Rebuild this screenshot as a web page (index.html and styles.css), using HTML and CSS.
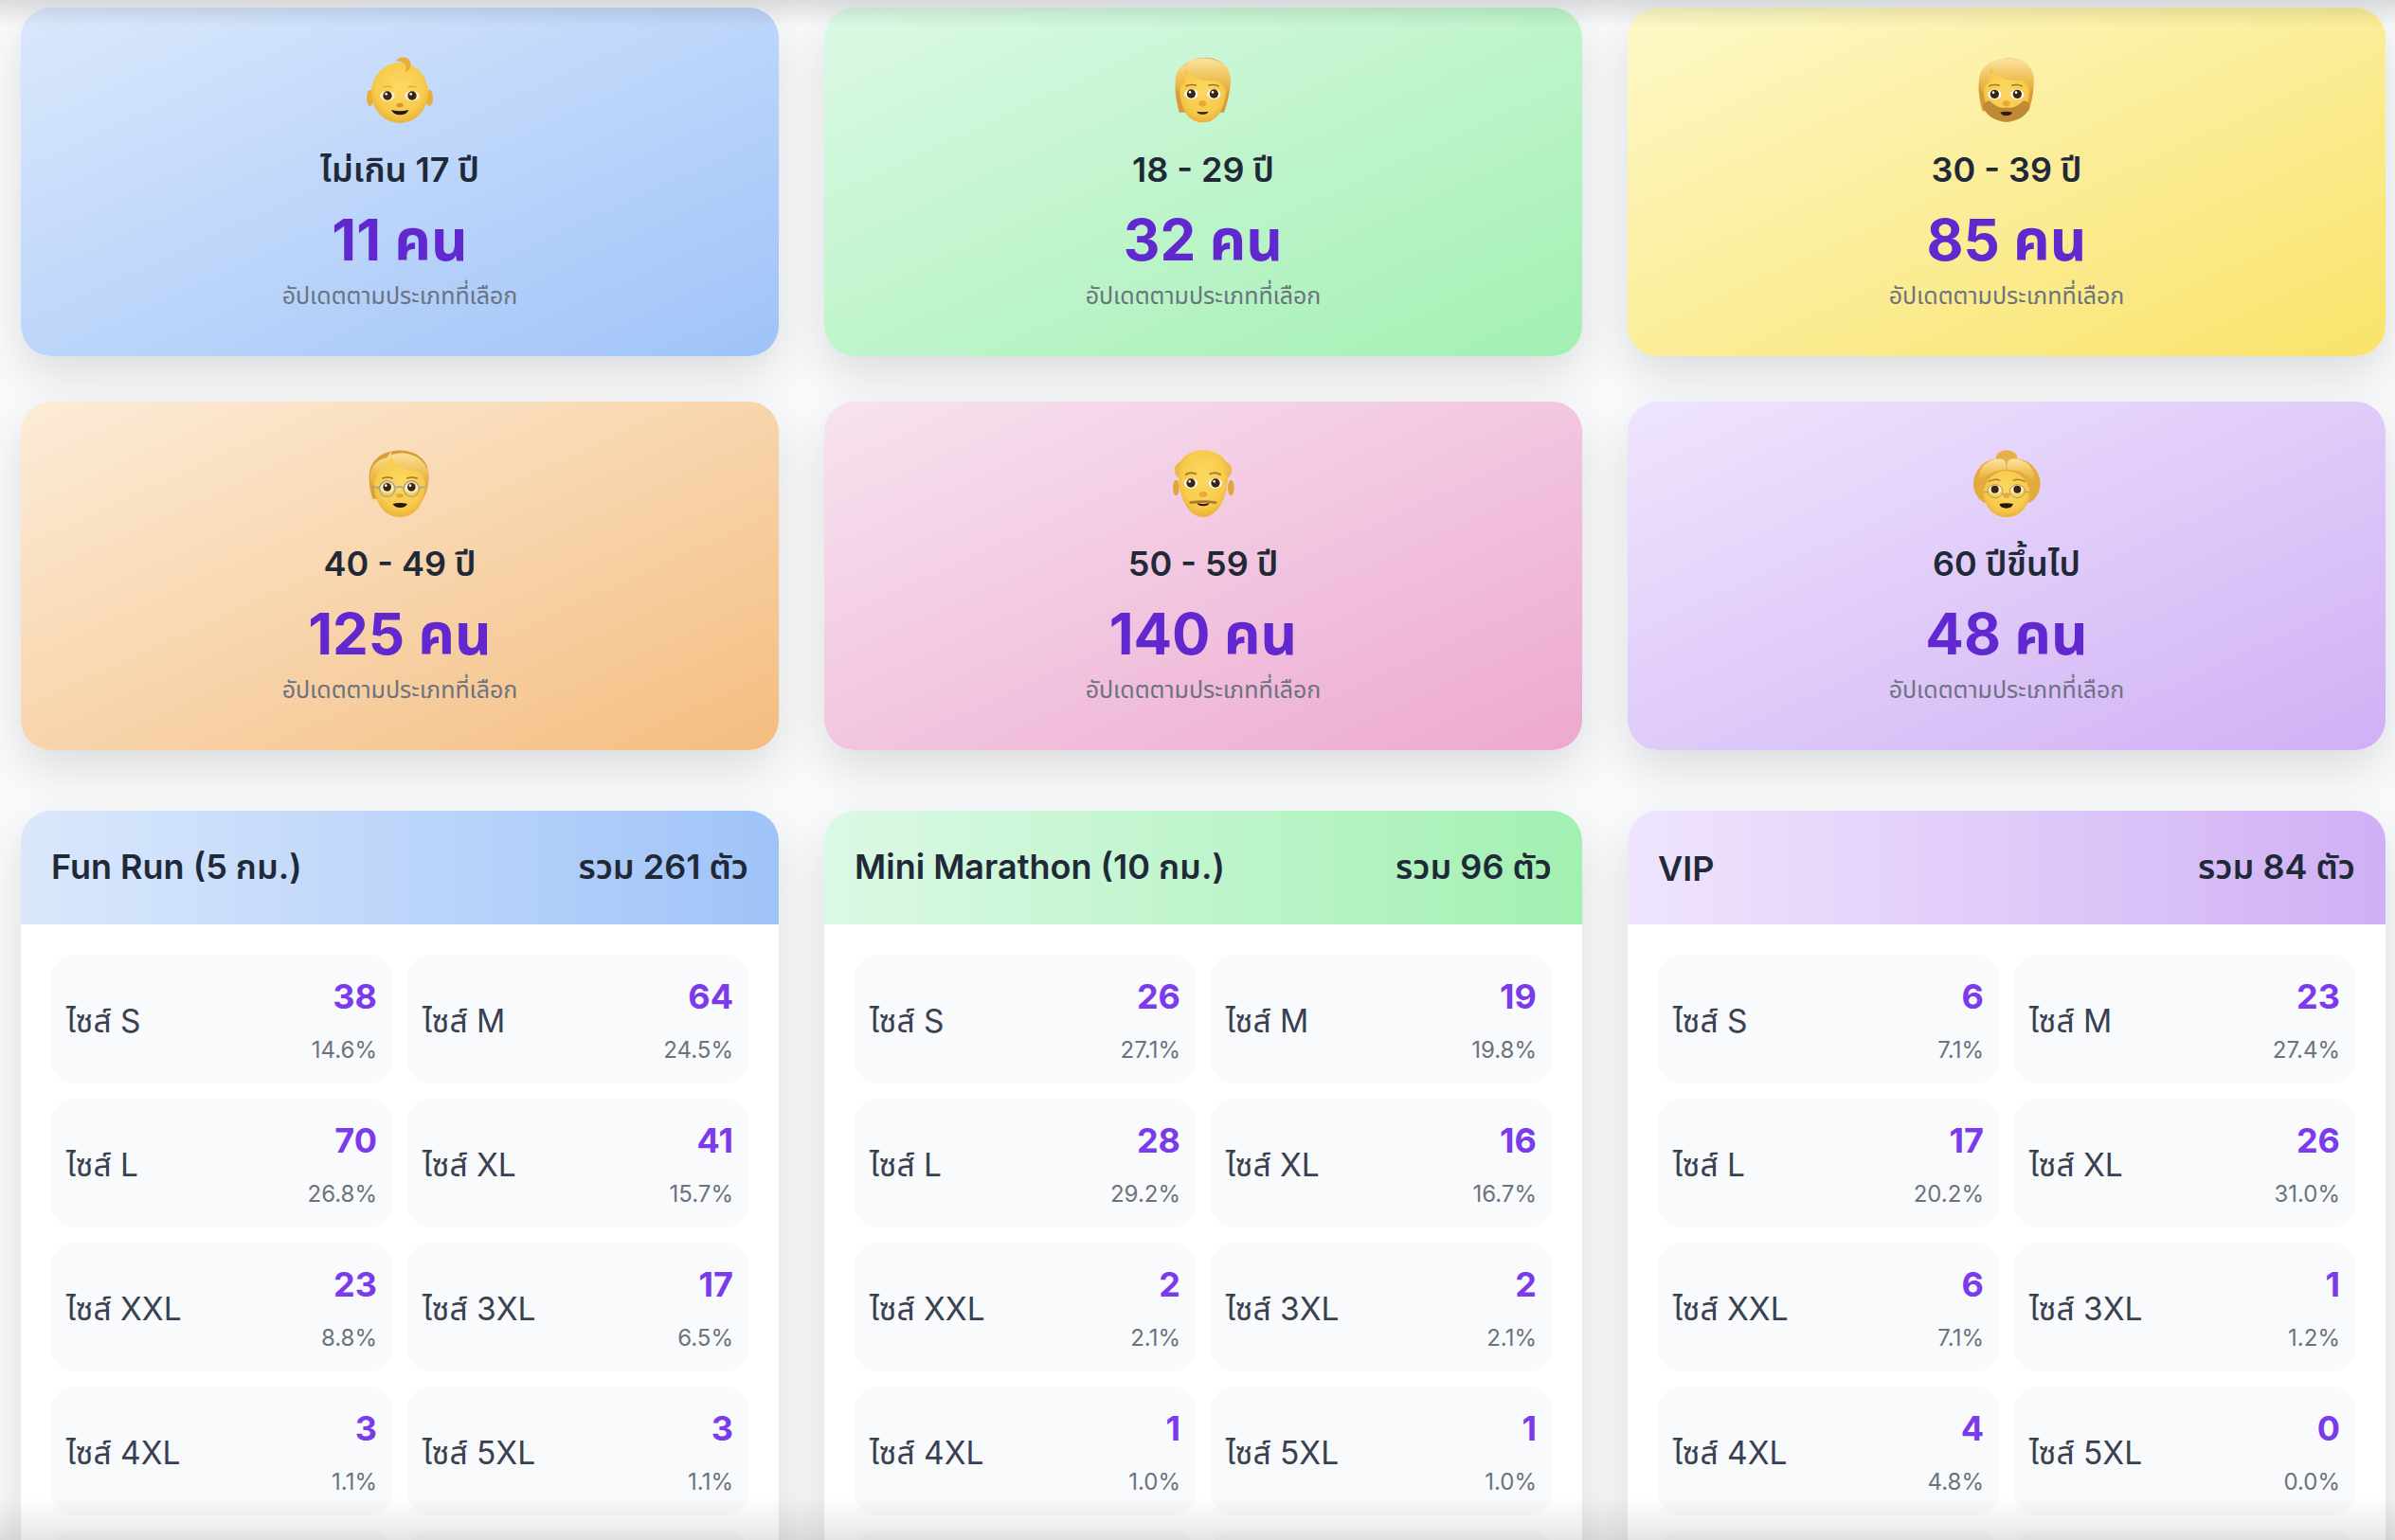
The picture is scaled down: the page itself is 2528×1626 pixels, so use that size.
FILE: index.html
```html
<!DOCTYPE html>
<html lang="th">
<head>
    <meta charset="UTF-8">
    <title>สรุปจำนวนผู้สมัคร</title>
    <link rel="stylesheet" href="styles.css">
</head>
<body>
<svg class="defs" width="0" height="0">
    <defs>
        <radialGradient id="skin" cx="0.5" cy="0.42" r="0.62">
            <stop offset="0" stop-color="#fcd964"/>
            <stop offset="0.68" stop-color="#f8cb4c"/>
            <stop offset="1" stop-color="#e8ac32"/>
        </radialGradient>
        <linearGradient id="hair" x1="0" y1="0" x2="0" y2="1">
            <stop offset="0" stop-color="#fce3a2"/>
            <stop offset="0.55" stop-color="#f0c258"/>
            <stop offset="1" stop-color="#e2a733"/>
        </linearGradient>
    </defs>
</svg>

<div class="edge-top"></div>
<div class="edge-bottom"></div>

<div class="page">
    <div class="ages">
        <div class="age-card blue">
            <svg class="emoji" viewBox="6 0 480 330">
                <ellipse cx="152" cy="190" rx="11" ry="26" fill="#e8ae3c"/>
                <ellipse cx="340" cy="190" rx="11" ry="26" fill="#e8ae3c"/>
                <ellipse cx="246" cy="174" rx="90" ry="96" fill="url(#skin)"/>
                <path d="M234 73c10-16 46-18 47 13 0 12-8 21-19 21 8-11 8-31-28-34z" fill="#e9ae33"/>
                <path d="M194 156q13-5 26 0M272 156q13-5 26 0" stroke="#d99b45" stroke-width="3" fill="none"/>
                <ellipse cx="207" cy="184" rx="23" ry="16" fill="#fdf0cf"/>
                <ellipse cx="285" cy="184" rx="23" ry="16" fill="#fdf0cf"/>
                <circle cx="207" cy="183" r="14" fill="#3c2412"/>
                <circle cx="285" cy="183" r="14" fill="#3c2412"/>
                <circle cx="203" cy="178" r="4" fill="#fff"/>
                <circle cx="281" cy="178" r="4" fill="#fff"/>
                <ellipse cx="246" cy="213" rx="11" ry="7" fill="#d8923a"/>
                <path d="M219 228q27 8 55 0q-6 16-27 16t-28-16z" fill="#23170e"/>
            </svg>
            <div class="age-name">ไม่เกิน 17 ปี</div>
            <div class="age-count">11 คน</div>
            <div class="age-note">อัปเดตตามประเภทที่เลือก</div>
        </div>
        <div class="age-card green">
            <svg class="emoji" viewBox="-30 0 480 330">
                <path d="M134 236c-14-50-20-110 6-140 30-44 130-48 150 10 12 40 0 90-14 130z" fill="#d69a38"/>
                <path d="M134 150c0 66 24 118 74 118s76-52 76-118c0-40-30-60-76-60s-74 20-74 60z" fill="url(#skin)"/>
                <path d="M130 178c-14-38-12-78 24-94 18-26 108-30 134 14 16 32 8 62-4 80-4-20-14-36-32-42-37 4-80-8-94-36-8 10-6 28-4 36-12 10-20 24-24 42z" fill="url(#hair)"/>
                <path d="M155 153q16-8 34-2M226 151q18-6 34 2" stroke="#a8702a" stroke-width="5" fill="none"/>
                <ellipse cx="172" cy="178" rx="21" ry="16" fill="#fff"/>
                <ellipse cx="244" cy="178" rx="21" ry="16" fill="#fff"/>
                <circle cx="172" cy="177" r="14" fill="#3c2412"/>
                <circle cx="244" cy="177" r="14" fill="#3c2412"/>
                <circle cx="168" cy="172" r="4" fill="#fff"/>
                <circle cx="240" cy="172" r="4" fill="#fff"/>
                <ellipse cx="208" cy="208" rx="12" ry="10" fill="#e9a93a"/>
                <path d="M190 233q18 4 36 0q-2 9-18 9t-18-9z" fill="#2a1b10"/>
            </svg>
            <div class="age-name">18 - 29 ปี</div>
            <div class="age-count">32 คน</div>
            <div class="age-note">อัปเดตตามประเภทที่เลือก</div>
        </div>
        <div class="age-card yellow">
            <svg class="emoji" viewBox="-6 0 480 330">
                <path d="M158 232c-14-50-20-110 6-134 30-44 130-48 150 10 12 40 2 90-10 124z" fill="#d69a38"/>
                <path d="M160 150c0 66 24 116 74 116s74-50 74-116c0-40-30-60-74-60s-74 20-74 60z" fill="url(#skin)"/>
                <path d="M160 214c4 30 40 52 74 52s70-22 74-52c-6-10-14-16-22-14-14 14-36 26-52 20-18 6-38-6-52-20-8-2-16 4-22 14z" fill="#c08a35"/>
                <path d="M156 176c-14-38-12-78 22-92 18-26 108-30 134 14 14 30 8 60-2 78-4-20-14-36-30-42-37 4-80-8-94-36-8 10-6 28-4 36-12 10-22 24-26 42z" fill="url(#hair)"/>
                <path d="M178 153q16-8 34-2M250 151q18-6 34 2" stroke="#a8702a" stroke-width="5" fill="none"/>
                <ellipse cx="196" cy="179" rx="21" ry="16" fill="#fff"/>
                <ellipse cx="268" cy="179" rx="21" ry="16" fill="#fff"/>
                <circle cx="196" cy="178" r="14" fill="#3c2412"/>
                <circle cx="268" cy="178" r="14" fill="#3c2412"/>
                <circle cx="192" cy="173" r="4" fill="#fff"/>
                <circle cx="264" cy="173" r="4" fill="#fff"/>
                <ellipse cx="233" cy="208" rx="12" ry="9" fill="#e9a93a"/>
                <path d="M214 236q19-5 38 0q-4 10-19 10t-19-10z" fill="#2a1b10"/>
            </svg>
            <div class="age-name">30 - 39 ปี</div>
            <div class="age-count">85 คน</div>
            <div class="age-note">อัปเดตตามประเภทที่เลือก</div>
        </div>
        <div class="age-card orange">
            <svg class="emoji" viewBox="6 -12 480 330">
                <path d="M160 200c-16-50-16-100 10-124 36-44 140-40 162 20 12 40 2 80-12 104z" fill="#d89e38"/>
                <path d="M162 140c0 66 30 118 84 118s84-52 84-118c-4-40-30-70-84-70s-80 30-84 70z" fill="url(#skin)"/>
                <path d="M156 164c-10-46 0-84 50-96l14-20-2 14c40-18 112 0 120 64 0 14-2 26-8 36-4-24-14-44-34-50-30 0-60-16-78-40-8 18-46 36-62 92z" fill="url(#hair)"/>
                <path d="M190 136q18-8 34 0M268 136q16-8 34 0" stroke="#a8702a" stroke-width="5" fill="none"/>
                <ellipse cx="206" cy="165" rx="20" ry="16" fill="#fdf3d8"/>
                <ellipse cx="283" cy="165" rx="20" ry="16" fill="#fdf3d8"/>
                <circle cx="206" cy="163" r="13" fill="#3c2412"/>
                <circle cx="283" cy="163" r="13" fill="#3c2412"/>
                <circle cx="202" cy="158" r="4" fill="#fff"/>
                <circle cx="279" cy="158" r="4" fill="#fff"/>
                <path d="M160 162l22 3M232 165q12-6 26 0M307 165l20-3" stroke="#9aa0a0" stroke-width="4" fill="none"/>
                <circle cx="206" cy="168" r="25" stroke="#9aa0a0" stroke-width="4" fill="none"/>
                <circle cx="283" cy="168" r="25" stroke="#9aa0a0" stroke-width="4" fill="none"/>
                <ellipse cx="246" cy="190" rx="11" ry="7" fill="#e9a93a"/>
                <path d="M224 216q23-6 46 0q-6 12-23 12t-23-12z" fill="#23170e"/>
            </svg>
            <div class="age-name">40 - 49 ปี</div>
            <div class="age-count">125 คน</div>
            <div class="age-note">อัปเดตตามประเภทที่เลือก</div>
        </div>
        <div class="age-card pink">
            <svg class="emoji" viewBox="-30 -12 480 330">
                <ellipse cx="124" cy="165" rx="10" ry="25" fill="#e0a73a"/>
                <ellipse cx="298" cy="165" rx="10" ry="25" fill="#e0a73a"/>
                <path d="M132 110c-2-40 40-64 78-64s80 24 78 64c4 80-30 148-78 148s-82-68-78-148z" fill="url(#skin)"/>
                <path d="M134 136c-22-16-20-46 6-54-6 14-6 34-6 54zM286 136c22-16 20-46-6-54 6 14 6 34 6 54z" fill="#e8bc55"/>
                <path d="M153 124q18-12 36-2M230 122q18-10 36 2" stroke="#b07a2c" stroke-width="6" fill="none"/>
                <ellipse cx="171" cy="151" rx="21" ry="16" fill="#fff"/>
                <ellipse cx="249" cy="151" rx="21" ry="16" fill="#fff"/>
                <circle cx="171" cy="150" r="14" fill="#3c2412"/>
                <circle cx="249" cy="150" r="14" fill="#3c2412"/>
                <circle cx="167" cy="145" r="4" fill="#fff"/>
                <circle cx="245" cy="145" r="4" fill="#fff"/>
                <ellipse cx="210" cy="186" rx="13" ry="9" fill="#e9a93a"/>
                <path d="M190 214q20 5 40 0q-4 9-20 9t-20-9z" fill="#23170e"/>
                <path d="M170 212q40-6 80 0" stroke="#b07a2c" stroke-width="8" fill="none" stroke-linecap="round"/>
            </svg>
            <div class="age-name">50 - 59 ปี</div>
            <div class="age-count">140 คน</div>
            <div class="age-note">อัปเดตตามประเภทที่เลือก</div>
        </div>
        <div class="age-card purple">
            <svg class="emoji" viewBox="-6 -12 480 330">
                <ellipse cx="234" cy="72" rx="34" ry="26" fill="#e6b046"/>
                <path d="M162 212c-40-26-42-78-14-110 20-28 66-40 86-14 20-26 68-14 88 14 28 32 26 84-14 110z" fill="#e3aa3c"/>
                <path d="M160 170c0 56 34 88 74 88s74-32 74-88c-16-40-40-58-74-58s-58 18-74 58z" fill="url(#skin)"/>
                <path d="M148 150c-10-50 30-80 70-76 14 2 16 16 14 34-30 0-64 10-84 42zM320 150c10-50-30-80-70-76-14 2-16 16-14 34 30 0 64 10 84 42z" fill="url(#hair)"/>
                <path d="M176 146q20-12 38-4M254 142q18-8 38 4" stroke="#b07a2c" stroke-width="4" fill="none"/>
                <ellipse cx="197" cy="171" rx="20" ry="14" fill="#fdf3d8"/>
                <ellipse cx="268" cy="171" rx="20" ry="14" fill="#fdf3d8"/>
                <circle cx="197" cy="170" r="12" fill="#3c2412"/>
                <circle cx="268" cy="170" r="12" fill="#3c2412"/>
                <path d="M162 180l14-2M220 186q14-6 28 0M292 178l16 2" stroke="#b09a60" stroke-width="3" fill="none"/>
                <ellipse cx="198" cy="176" rx="24" ry="21" stroke="#b09a60" stroke-width="3" fill="none"/>
                <ellipse cx="268" cy="176" rx="24" ry="21" stroke="#b09a60" stroke-width="3" fill="none"/>
                <ellipse cx="233" cy="190" rx="10" ry="8" fill="#e9a93a"/>
                <path d="M211 216q22-5 44 0q-4 14-22 14t-22-14z" fill="#23170e"/>
            </svg>
            <div class="age-name">60 ปีขึ้นไป</div>
            <div class="age-count">48 คน</div>
            <div class="age-note">อัปเดตตามประเภทที่เลือก</div>
        </div>
    </div>

    <div class="panels">
        <div class="panel">
            <div class="panel-head blue-x">
                <div>Fun Run (5 กม.)</div>
                <div>รวม 261 ตัว</div>
            </div>
            <div class="sizes">
                <div class="size"><span class="size-name">ไซส์ S</span><div class="size-num"><b>38</b><span>14.6%</span></div></div>
                <div class="size"><span class="size-name">ไซส์ M</span><div class="size-num"><b>64</b><span>24.5%</span></div></div>
                <div class="size"><span class="size-name">ไซส์ L</span><div class="size-num"><b>70</b><span>26.8%</span></div></div>
                <div class="size"><span class="size-name">ไซส์ XL</span><div class="size-num"><b>41</b><span>15.7%</span></div></div>
                <div class="size"><span class="size-name">ไซส์ XXL</span><div class="size-num"><b>23</b><span>8.8%</span></div></div>
                <div class="size"><span class="size-name">ไซส์ 3XL</span><div class="size-num"><b>17</b><span>6.5%</span></div></div>
                <div class="size"><span class="size-name">ไซส์ 4XL</span><div class="size-num"><b>3</b><span>1.1%</span></div></div>
                <div class="size"><span class="size-name">ไซส์ 5XL</span><div class="size-num"><b>3</b><span>1.1%</span></div></div>
                <div class="size"></div>
                <div class="size"></div>
            </div>
        </div>
        <div class="panel">
            <div class="panel-head green-x">
                <div>Mini Marathon (10 กม.)</div>
                <div>รวม 96 ตัว</div>
            </div>
            <div class="sizes">
                <div class="size"><span class="size-name">ไซส์ S</span><div class="size-num"><b>26</b><span>27.1%</span></div></div>
                <div class="size"><span class="size-name">ไซส์ M</span><div class="size-num"><b>19</b><span>19.8%</span></div></div>
                <div class="size"><span class="size-name">ไซส์ L</span><div class="size-num"><b>28</b><span>29.2%</span></div></div>
                <div class="size"><span class="size-name">ไซส์ XL</span><div class="size-num"><b>16</b><span>16.7%</span></div></div>
                <div class="size"><span class="size-name">ไซส์ XXL</span><div class="size-num"><b>2</b><span>2.1%</span></div></div>
                <div class="size"><span class="size-name">ไซส์ 3XL</span><div class="size-num"><b>2</b><span>2.1%</span></div></div>
                <div class="size"><span class="size-name">ไซส์ 4XL</span><div class="size-num"><b>1</b><span>1.0%</span></div></div>
                <div class="size"><span class="size-name">ไซส์ 5XL</span><div class="size-num"><b>1</b><span>1.0%</span></div></div>
                <div class="size"></div>
                <div class="size"></div>
            </div>
        </div>
        <div class="panel">
            <div class="panel-head purple-x">
                <div>VIP</div>
                <div>รวม 84 ตัว</div>
            </div>
            <div class="sizes">
                <div class="size"><span class="size-name">ไซส์ S</span><div class="size-num"><b>6</b><span>7.1%</span></div></div>
                <div class="size"><span class="size-name">ไซส์ M</span><div class="size-num"><b>23</b><span>27.4%</span></div></div>
                <div class="size"><span class="size-name">ไซส์ L</span><div class="size-num"><b>17</b><span>20.2%</span></div></div>
                <div class="size"><span class="size-name">ไซส์ XL</span><div class="size-num"><b>26</b><span>31.0%</span></div></div>
                <div class="size"><span class="size-name">ไซส์ XXL</span><div class="size-num"><b>6</b><span>7.1%</span></div></div>
                <div class="size"><span class="size-name">ไซส์ 3XL</span><div class="size-num"><b>1</b><span>1.2%</span></div></div>
                <div class="size"><span class="size-name">ไซส์ 4XL</span><div class="size-num"><b>4</b><span>4.8%</span></div></div>
                <div class="size"><span class="size-name">ไซส์ 5XL</span><div class="size-num"><b>0</b><span>0.0%</span></div></div>
                <div class="size"></div>
                <div class="size"></div>
            </div>
        </div>
    </div>
</div>
</body>
</html>
```

FILE: styles.css
```css
*{
    box-sizing: border-box;
    margin: 0;
    padding: 0;
}
html,body{
    height: 100%;
    overflow: hidden;
}
body{
    background-color: #f9fafb;
    font-family: "Inter", "Noto Sans Thai", "Noto Sans", "DejaVu Sans", sans-serif;
    color: #1f2937;
}
.defs{
    position: absolute;
}
.edge-top,.edge-bottom{
    position: absolute;
    left: 0;
    width: 100%;
    z-index: 5;
    pointer-events: none;
}
.edge-top{
    top: 0;
    height: 28px;
    background: linear-gradient(to bottom, rgba(0,0,0,.12), rgba(0,0,0,0));
}
.edge-bottom{
    bottom: 0;
    height: 46px;
    background: linear-gradient(to top, rgba(0,0,0,.1), rgba(0,0,0,0));
}
.page{
    padding: 8px 10px 0 22px;
}
.ages,.panels{
    display: grid;
    grid-template-columns: repeat(3, 800px);
    gap: 48px;
}
.panels{
    margin-top: 64px;
}
.age-card{
    height: 368px;
    padding-top: 32px;
    border-radius: 32px;
    text-align: center;
    box-shadow: 0 20px 50px rgba(0,0,0,.12);
}
.blue{ background: linear-gradient(to bottom right, #dbe8fc, #9fc3f8); }
.green{ background: linear-gradient(to bottom right, #dcf9e5, #a2f0b2); }
.yellow{ background: linear-gradient(to bottom right, #fdf8c8, #f9e36a); }
.orange{ background: linear-gradient(to bottom right, #fcecd8, #f4bd80); }
.pink{ background: linear-gradient(to bottom right, #f7e3ef, #eda8d0); }
.purple{ background: linear-gradient(to bottom right, #efe5fd, #d0b0f5); }
.emoji{
    display: block;
    width: 160px;
    height: 110px;
    margin: 0 auto;
}
.age-name{
    height: 58px;
    line-height: 58px;
    font-size: 36px;
    font-weight: 600;
}
.age-count{
    height: 90px;
    line-height: 90px;
    font-size: 60px;
    font-weight: 700;
    color: #6128d0;
}
.age-note{
    margin-top: -4px;
    line-height: 36px;
    font-size: 25px;
    color: #6b7280;
}
.panel{
    background-color: #fff;
    border-radius: 32px;
    overflow: hidden;
    box-shadow: 0 20px 50px rgba(0,0,0,.12);
}
.panel-head{
    display: flex;
    justify-content: space-between;
    align-items: center;
    height: 120px;
    padding: 2px 32px 0;
    font-size: 36px;
    font-weight: 600;
}
.blue-x{ background: linear-gradient(90deg, #dbe8fc, #9fc3f8); }
.green-x{ background: linear-gradient(90deg, #dcf9e5, #a2f0b2); }
.purple-x{ background: linear-gradient(90deg, #efe5fd, #d0b0f5); }
.sizes{
    display: grid;
    grid-template-columns: 1fr 1fr;
    grid-auto-rows: 136px;
    gap: 16px;
    padding: 32px;
}
.size{
    display: flex;
    justify-content: space-between;
    align-items: center;
    padding: 0 16px;
    border-radius: 24px;
    background-color: #f9fafb;
}
.size-name{
    position: relative;
    top: 3px;
    font-size: 33.5px;
    color: #374151;
}
.size-num{
    display: flex;
    flex-direction: column;
    align-items: flex-end;
}
.size-num b{
    font-size: 36px;
    font-weight: 700;
    line-height: 54px;
    color: #7c3aed;
}
.size-num span{
    margin-top: 12px;
    font-size: 24px;
    line-height: 36px;
    color: #6b7280;
}
```
